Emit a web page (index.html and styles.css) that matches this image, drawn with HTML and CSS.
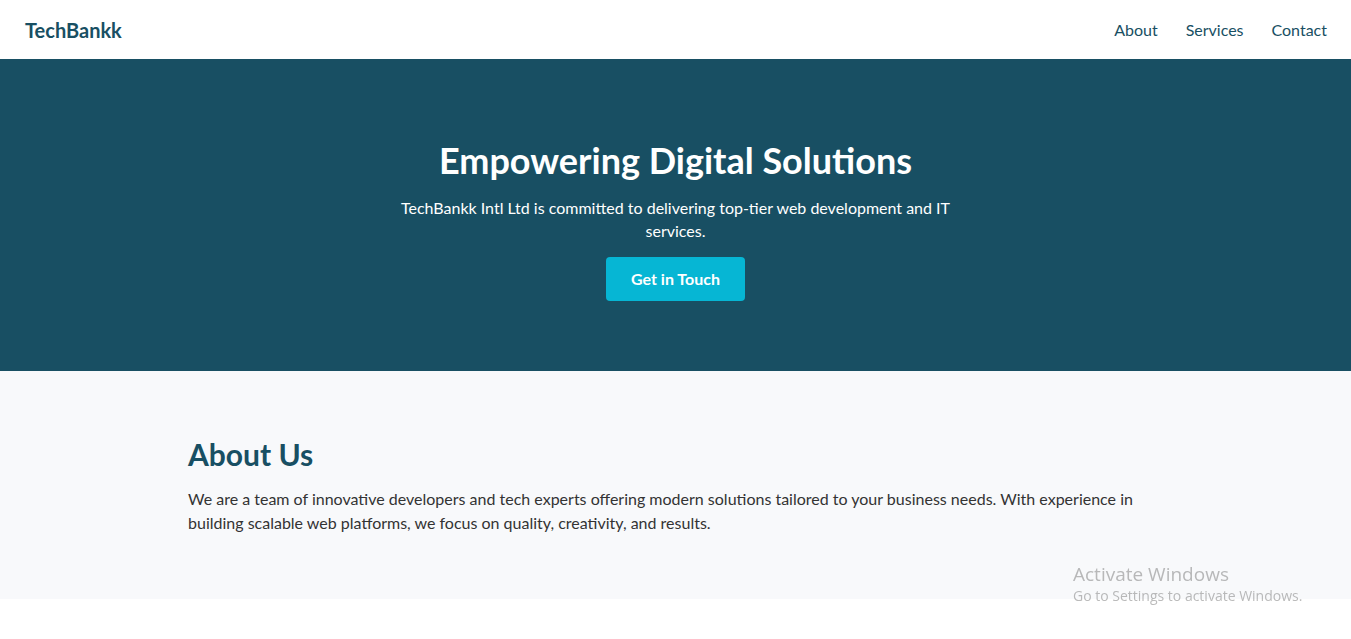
FILE: index.html
```html
<!DOCTYPE html>
<html lang="en">
<head>
<meta charset="utf-8">
<title>TechBankk</title>
<link rel="stylesheet" href="styles.css">
</head>
<body>
<header class="site-header">
  <div class="logo">TechBankk</div>
  <nav class="nav">
    <a href="#about">About</a>
    <a href="#services">Services</a>
    <a href="#contact">Contact</a>
  </nav>
</header>
<section class="hero">
  <h1 class="hero-title">Empowering Digital Solutions</h1>
  <p class="hero-text">TechBankk Intl Ltd is committed to delivering top-tier web development and IT services.</p>
  <a class="btn" href="#contact">Get in Touch</a>
</section>
<section class="about" id="about">
  <div class="container">
    <h2 class="about-title">About Us</h2>
    <p class="about-text">We are a team of innovative developers and tech experts offering modern solutions tailored to your business needs. With experience in building scalable web platforms, we focus on quality, creativity, and results.</p>
  </div>
</section>
<div class="watermark">
  <div class="wm-title">Activate Windows</div>
  <div class="wm-sub">Go to Settings to activate Windows.</div>
</div>
</body>
</html>
```
FILE: styles.css
```css
* { box-sizing: border-box; }
body {
  margin: 0;
  font-family: "Lato", "Inter", sans-serif;
  color: #333;
  background: #fff;
}
.site-header {
  height: 59px;
  display: flex;
  align-items: center;
  justify-content: space-between;
  padding: 0 24px 0 25px;
  background: #fff;
}
.logo {
  font-size: 20px;
  font-weight: 700;
  color: #184f63;
}
.nav {
  display: flex;
  gap: 28px;
}
.nav a {
  color: #184f63;
  text-decoration: none;
  font-size: 16px;
}
.hero {
  background: #184f63;
  color: #fff;
  text-align: center;
  padding: 80px 20px 70px;
  display: flex;
  flex-direction: column;
  align-items: center;
}
.hero-title {
  margin: 0 0 15px;
  font-size: 36px;
  line-height: 42px;
  font-weight: 700;
}
.hero-text {
  margin: 0 0 15px;
  max-width: 560px;
  font-size: 16px;
  line-height: 23px;
}
.btn {
  display: inline-block;
  background: #06b6d4;
  color: #fff;
  text-decoration: none;
  font-weight: 700;
  font-size: 16px;
  padding: 0 25px;
  height: 44px;
  line-height: 44px;
  border-radius: 4px;
}
.about {
  background: #f8f9fb;
  padding: 65px 0 64px;
}
.container {
  max-width: 975px;
  margin: 0 auto;
}
.about-title {
  margin: 0 0 15px;
  font-size: 30px;
  line-height: 36px;
  font-weight: 700;
  color: #184f63;
}
.about-text {
  margin: 0;
  font-size: 16px;
  line-height: 24px;
  color: #333;
}
.watermark {
  position: fixed;
  left: 1073px;
  top: 562px;
  color: rgba(120,120,120,0.5);
  font-family: "Open Sans", "DejaVu Sans", sans-serif;
  pointer-events: none;
}
.wm-title { font-size: 19px; line-height: 24px; }
.wm-sub { font-size: 14px; line-height: 20px; }
```
